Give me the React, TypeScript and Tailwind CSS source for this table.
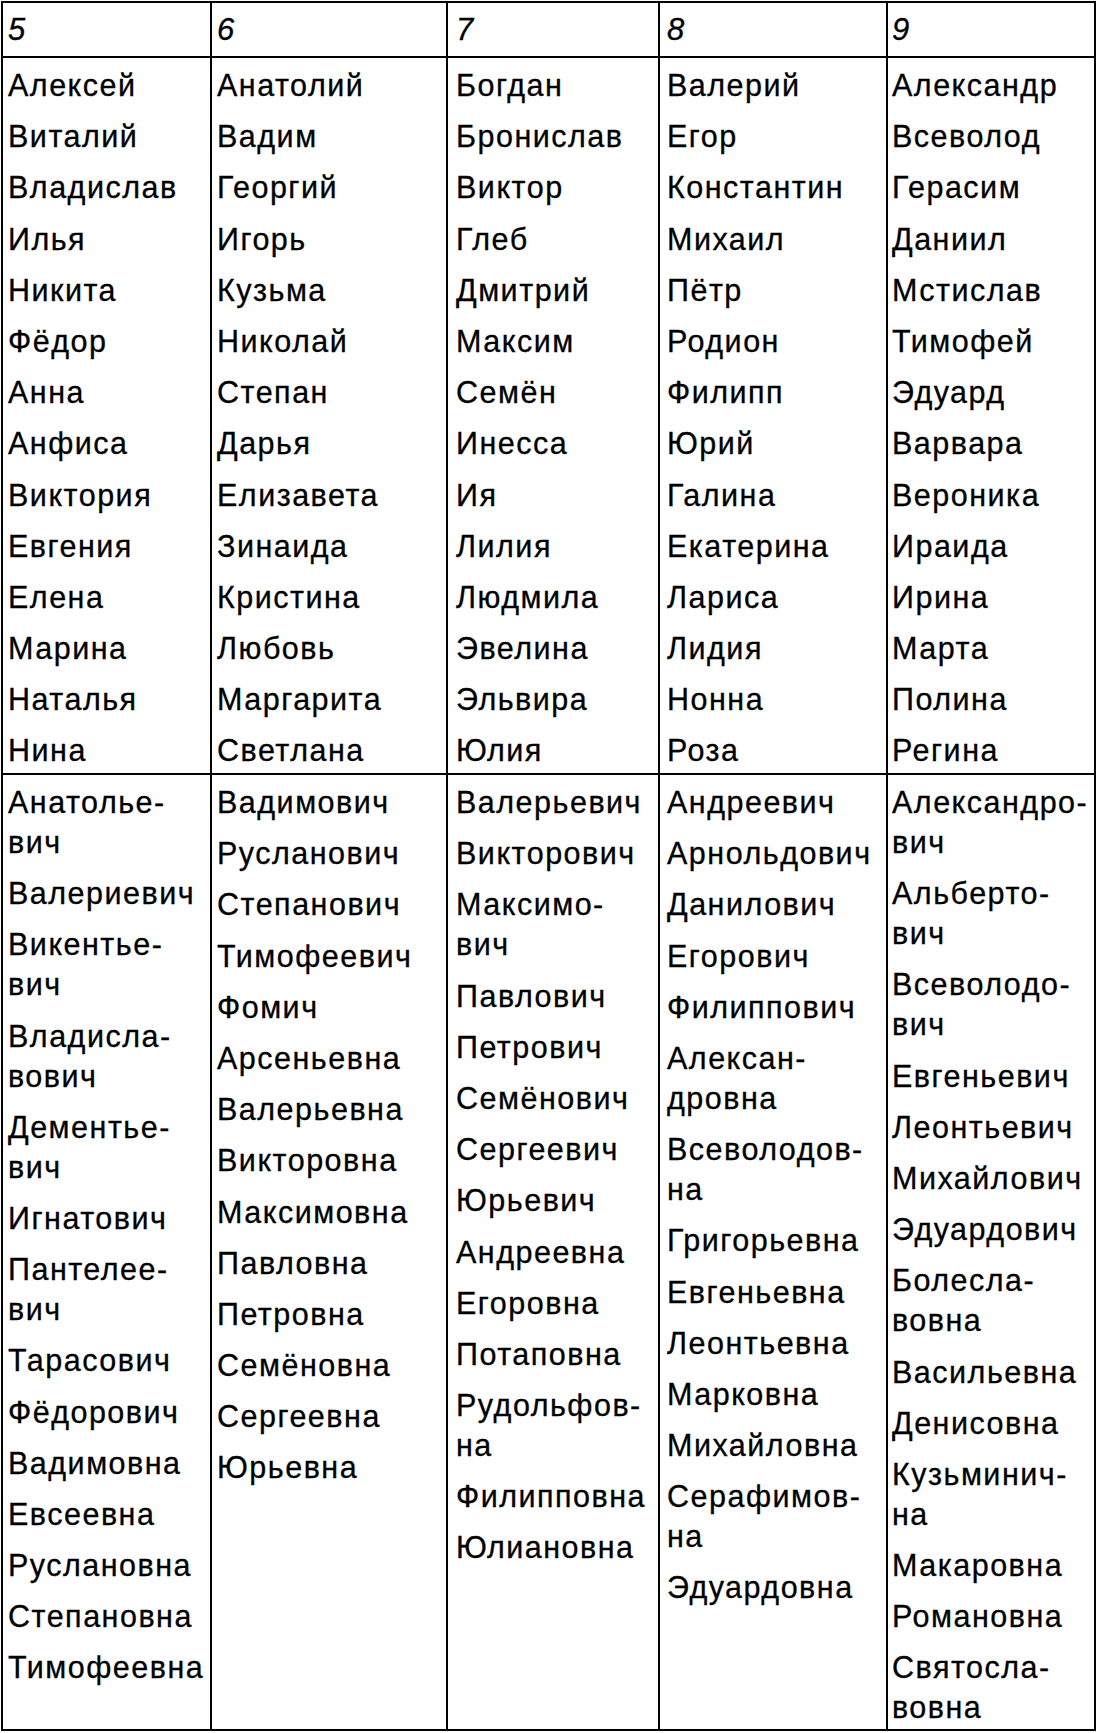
const header = ['5', '6', '7', '8', '9'];

const names: string[][] = [
  ['Алексей', 'Виталий', 'Владислав', 'Илья', 'Никита', 'Фёдор', 'Анна', 'Анфиса', 'Виктория', 'Евгения', 'Елена', 'Марина', 'Наталья', 'Нина'],
  ['Анатолий', 'Вадим', 'Георгий', 'Игорь', 'Кузьма', 'Николай', 'Степан', 'Дарья', 'Елизавета', 'Зинаида', 'Кристина', 'Любовь', 'Маргарита', 'Светлана'],
  ['Богдан', 'Бронислав', 'Виктор', 'Глеб', 'Дмитрий', 'Максим', 'Семён', 'Инесса', 'Ия', 'Лилия', 'Людмила', 'Эвелина', 'Эльвира', 'Юлия'],
  ['Валерий', 'Егор', 'Константин', 'Михаил', 'Пётр', 'Родион', 'Филипп', 'Юрий', 'Галина', 'Екатерина', 'Лариса', 'Лидия', 'Нонна', 'Роза'],
  ['Александр', 'Всеволод', 'Герасим', 'Даниил', 'Мстислав', 'Тимофей', 'Эдуард', 'Варвара', 'Вероника', 'Ираида', 'Ирина', 'Марта', 'Полина', 'Регина'],
];

// "|" marks where the word is broken with a hyphen
const patronymics: string[][] = [
  ['Анатолье-|вич', 'Валериевич', 'Викентье-|вич', 'Владисла-|вович', 'Дементье-|вич', 'Игнатович', 'Пантелее-|вич', 'Тарасович', 'Фёдорович', 'Вадимовна', 'Евсеевна', 'Руслановна', 'Степановна', 'Тимофеевна'],
  ['Вадимович', 'Русланович', 'Степанович', 'Тимофеевич', 'Фомич', 'Арсеньевна', 'Валерьевна', 'Викторовна', 'Максимовна', 'Павловна', 'Петровна', 'Семёновна', 'Сергеевна', 'Юрьевна'],
  ['Валерьевич', 'Викторович', 'Максимо-|вич', 'Павлович', 'Петрович', 'Семёнович', 'Сергеевич', 'Юрьевич', 'Андреевна', 'Егоровна', 'Потаповна', 'Рудольфов-|на', 'Филипповна', 'Юлиановна'],
  ['Андреевич', 'Арнольдович', 'Данилович', 'Егорович', 'Филиппович', 'Алексан-|дровна', 'Всеволодов-|на', 'Григорьевна', 'Евгеньевна', 'Леонтьевна', 'Марковна', 'Михайловна', 'Серафимов-|на', 'Эдуардовна'],
  ['Александро-|вич', 'Альберто-|вич', 'Всеволодо-|вич', 'Евгеньевич', 'Леонтьевич', 'Михайлович', 'Эдуардович', 'Болесла-|вовна', 'Васильевна', 'Денисовна', 'Кузьминич-|на', 'Макаровна', 'Романовна', 'Святосла-|вовна'],
];

const pads = ['pl-[5px]', 'pl-[5px]', 'pl-[8px]', 'pl-[7px]', 'pl-[4px]'];

function Cell({ items, pad }: { items: string[]; pad: string }) {
  return (
    <div className={`bg-white ${pad} pt-[7px] flex flex-col gap-[11.2px]`}>
      {items.map((item) => (
        <div key={item} className="leading-[40px] whitespace-nowrap">
          {item.split('|').map((part, i) => (
            <div key={i}>{part}</div>
          ))}
        </div>
      ))}
    </div>
  );
}

export default function App() {
  return (
    <div className="bg-white min-h-[1733px] pl-[1px] pt-[1px] text-black font-['Liberation_Sans',Arial,sans-serif] text-[30.5px] tracking-[1.5px] [-webkit-text-stroke:0.3px_black]">
      <div className="grid w-fit grid-cols-[207px_234px_210px_226px_206px] grid-rows-[53px_715px_954px] gap-[2px] bg-black p-[2px]">
        {header.map((h, i) => (
          <div key={h} className={`bg-white ${pads[i]} pt-[7px] leading-[40px] text-[31px] italic`}>
            {h}
          </div>
        ))}
        {names.map((col, i) => (
          <Cell key={'n' + i} items={col} pad={pads[i]} />
        ))}
        {patronymics.map((col, i) => (
          <Cell key={'p' + i} items={col} pad={pads[i]} />
        ))}
      </div>
    </div>
  );
}
